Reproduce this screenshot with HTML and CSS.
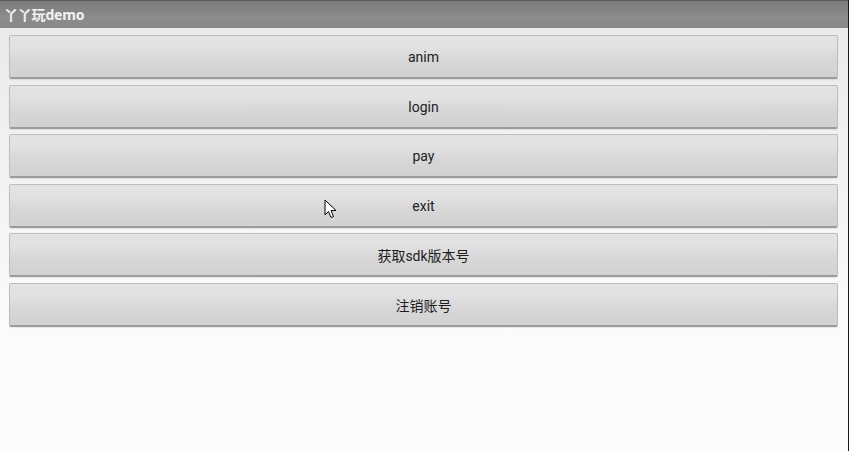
FILE: index.html
```html
<!DOCTYPE html>
<html>
<head>
<meta charset="utf-8">
<link rel="stylesheet" href="styles.css">
</head>
<body>
<div class="window">
  <div class="titlebar">丫丫玩demo</div>
  <div class="content">
    <div class="btn">anim</div>
    <div class="btn">login</div>
    <div class="btn">pay</div>
    <div class="btn">exit</div>
    <div class="btn">获取sdk版本号</div>
    <div class="btn">注销账号</div>
  </div>
  <svg class="cursor" width="13" height="20" viewBox="0 0 13 20">
    <path d="M1 1 L1 16 L4.5 12.5 L7 18.5 L9.5 17.5 L7 11.5 L12 11.5 Z" fill="#fff" stroke="#000" stroke-width="1" stroke-linejoin="round"/>
  </svg>
</div>
</body>
</html>
```
FILE: styles.css
```css
html, body {
  margin: 0;
  padding: 0;
}
body {
  width: 849px;
  height: 451px;
  overflow: hidden;
  font-family: Roboto, "Noto Sans CJK SC", sans-serif;
}
.window {
  position: relative;
  width: 848px;
  height: 451px;
  border-right: 1px solid #1a1a1a;
  background: linear-gradient(to bottom, #e8e8e8 0px, #f4f4f4 200px, #fbfbfb 330px, #fcfcfc 451px);
}
.titlebar {
  height: 28px;
  box-sizing: border-box;
  border-top: 1px solid #5a5a5a;
  background: linear-gradient(to bottom, #7a7a7a, #8c8c8c 60%, #888 100%);
  color: #f2f2f2;
  font-weight: bold;
  font-size: 14px;
  line-height: 27px;
  padding-left: 4px;
  font-family: "Noto Sans", "Noto Sans CJK SC", sans-serif;
  letter-spacing: -0.2px;
}
.content {
  display: flex;
  flex-direction: column;
  gap: 5.6px;
  padding: 7px 10px 0 9px;
}
.btn {
  height: 44px;
  box-sizing: border-box;
  border: 1px solid #bdbdbd;
  border-bottom: 2px solid #9c9c9c;
  border-radius: 2px;
  background: linear-gradient(to bottom, #e3e3e3 0%, #e1e1e1 30%, #d8d8d8 55%, #d1d1d1 100%);
  box-shadow: 0 1px 1px rgba(0,0,0,0.08);
  display: flex;
  align-items: center;
  justify-content: center;
  font-size: 14px;
  color: #1e1e1e;
  padding-top: 1px;
}
.cursor {
  position: absolute;
  left: 324px;
  top: 199px;
}
```
